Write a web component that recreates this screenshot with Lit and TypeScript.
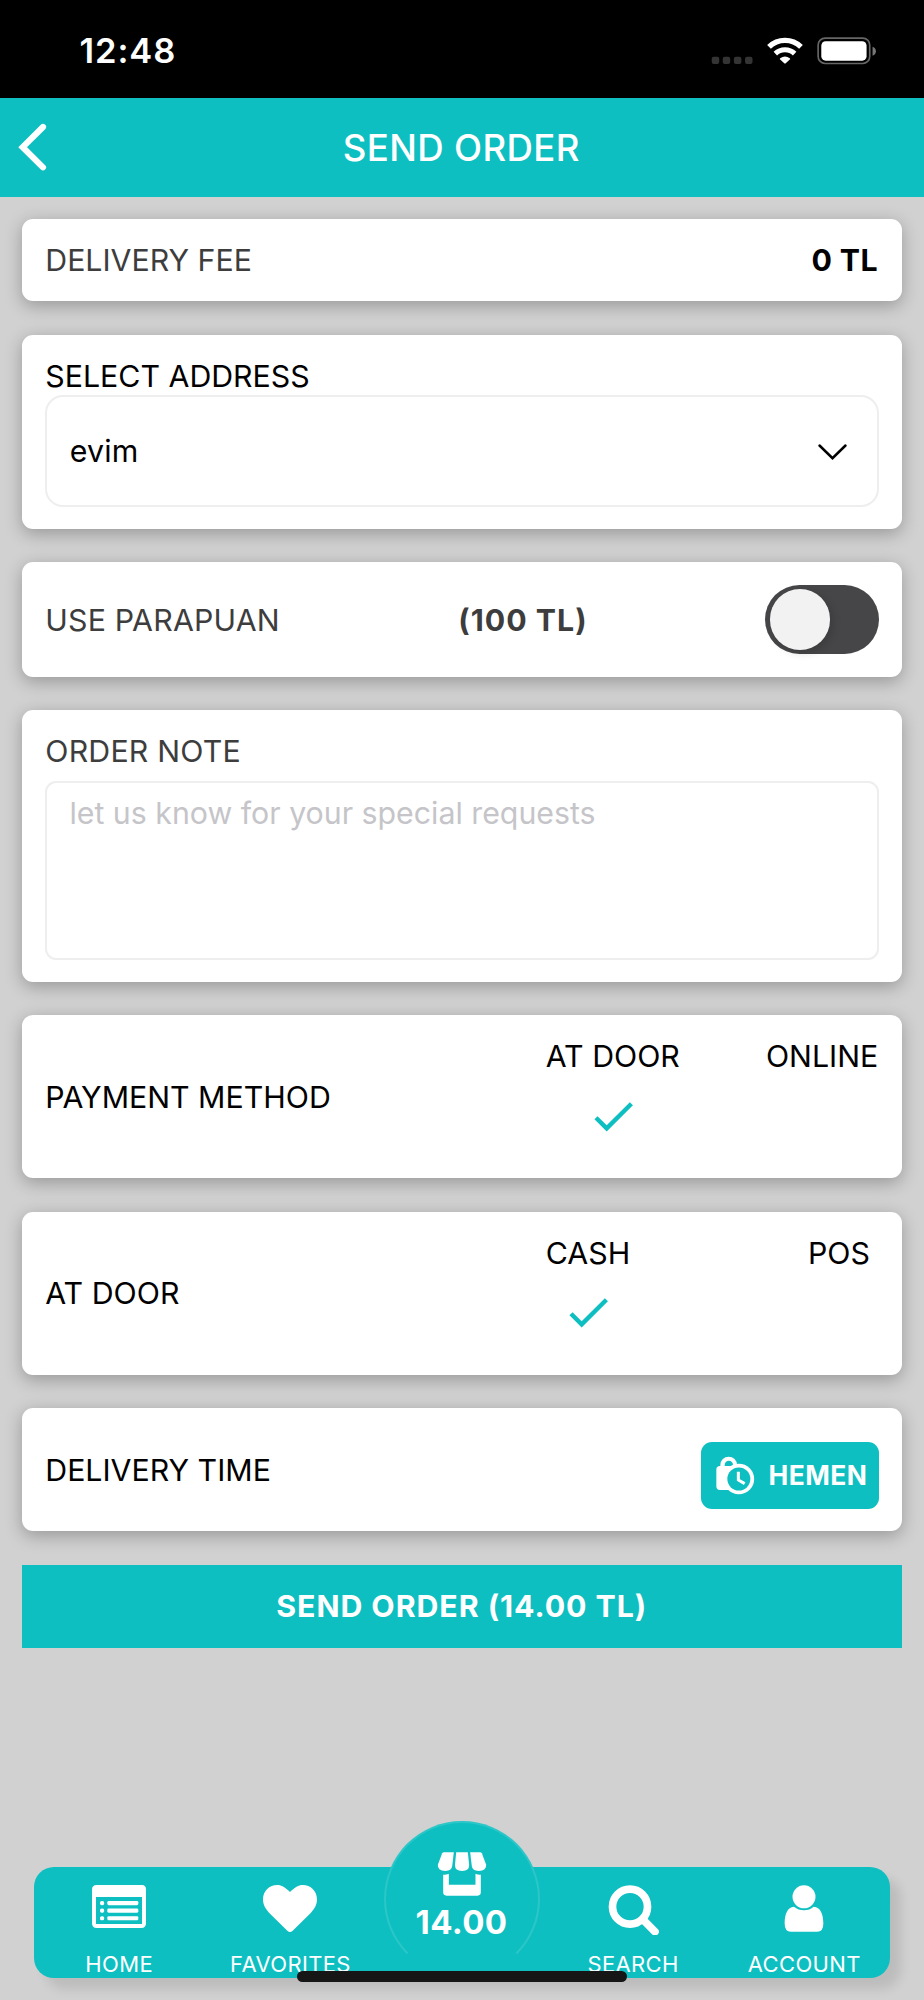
import { LitElement, html, css, svg, nothing } from 'lit';
import { customElement, property } from 'lit/decorators.js';

const checkIcon = html`<svg class="check" viewBox="0 0 24 24"><path d="M9 16.17 4.83 12l-1.42 1.41L9 19 21 7l-1.41-1.41z" /></svg>`;

const navIcons = {
  home: svg`<path fill-rule="evenodd" d="M12 12H150Q162 12 162 26V127Q162 141 148 141H14Q0 141 0 127V26Q0 12 14 12ZM12 48V129H150V48Z"/>
    ${[66, 88.5, 111.5].map(
      (y) => svg`<rect x="24" y=${y - 6} width="12.5" height="12.5" rx="5"/><rect x="46" y=${y - 6} width="93" height="12.5" rx="4"/>`,
    )}`,
  heart: svg`<path d="M81 33C66 19 56 12 43 12C19 12 0 30 0 55C0 71 7 83 18 95L73 149.500Q81 157 89 149.500L144 95C155 83 162 71 162 55C162 30 143 12 119 12C106 12 96 19 81 33Z"/>`,
  search: svg`<g fill="none" stroke="#fff"><circle cx="72" cy="77" r="52.500" stroke-width="23"/><path d="M113 118 147 152" stroke-width="23" stroke-linecap="round"/></g>`,
  account: svg`<circle cx="81" cy="47.500" r="34.500"/><path d="M51 77Q64 87.500 81 87.500Q98 87.500 110 77C131 78 139 100 139 128Q139 152 120 152H42Q23 152 23 128C23 100 31 78 51 77Z"/>`,
};

@customElement('nav-item')
class NavItem extends LitElement {
  @property() label = '';
  @property() icon: keyof typeof navIcons = 'home';

  static styles = css`
    :host {
      flex: 1;
      display: flex;
      flex-direction: column;
      align-items: center;
    }
    svg {
      width: 54px;
      height: 54px;
      fill: #fff;
      display: block;
    }
    .label {
      margin-top: 15.6px;
      font-size: 22px;
      line-height: 26px;
      letter-spacing: 0.35px;
      white-space: nowrap;
    }
  `;

  render() {
    return html`<svg viewBox="0 0 162 162">${navIcons[this.icon]}</svg><span class="label">${this.label}</span>`;
  }
}

@customElement('app-root')
class AppRoot extends LitElement {
  static styles = css`
    :host {
      --teal: #0ebfc1;
      display: flex;
      flex-direction: column;
      position: relative;
      box-sizing: border-box;
      width: 924px;
      height: 2000px;
      overflow: hidden;
      background: #d1d1d1;
      color: #000;
      font: 400 30.3px/37.3px Inter, 'Liberation Sans', sans-serif;
    }
    svg {
      display: block;
      flex: none;
    }
    .status {
      height: 98.3px;
      background: #000;
      color: #fff;
      display: flex;
      justify-content: space-between;
      align-items: center;
      padding: 2px 45.4px 0 79.5px;
      box-sizing: border-box;
      flex: none;
    }
    .time {
      font-size: 34.5px;
      font-weight: 600;
      letter-spacing: 0.9px;
      padding-top: 1px;
    }
    .indicators {
      width: 168.3px;
      height: 33.3px;
    }
    .header {
      height: 98.4px;
      flex: none;
      background: var(--teal);
      color: #fff;
      display: grid;
      grid-template-columns: 80px 1fr 80px;
      align-items: center;
      text-align: center;
      font-size: 36.6px;
      font-weight: 500;
      letter-spacing: 0.35px;
    }
    .header span {
      padding: 1.4px 1.4px 0 0;
    }
    .back {
      width: 30px;
      height: 50px;
      margin-left: 17px;
    }
    .content {
      display: flex;
      flex-direction: column;
      gap: 33.5px;
      padding: 22px 22.3px 0;
    }
    .content span {
      padding: 0.7px 0 0 0.7px;
      margin-bottom: -0.7px;
    }
    .card {
      background: #fff;
      border-radius: 11px;
      padding: 22.3px;
      box-sizing: border-box;
      box-shadow: 0 4.5px 17px rgba(0, 0, 0, 0.27);
      display: flex;
      align-items: center;
      justify-content: space-between;
    }
    .stack {
      flex-direction: column;
      align-items: stretch;
      justify-content: flex-start;
    }
    .fee {
      height: 82.8px;
    }
    .address {
      height: 193.9px;
    }
    .points {
      height: 114.2px;
    }
    .note {
      height: 271.9px;
    }
    .choice {
      height: 163px;
      align-items: stretch;
      justify-content: flex-start;
    }
    .when {
      height: 122.6px;
    }
    .soft {
      color: #3d3d3d;
    }
    .wide {
      letter-spacing: 0.2px;
    }
    .bold {
      font-weight: 700;
    }
    .fee .bold {
      letter-spacing: 0.4px;
      padding-right: 1.4px;
    }
    .select {
      height: 112px;
      box-sizing: border-box;
      border: 2px solid #eee;
      border-radius: 18px;
      padding: 0 29px 0 22.5px;
      display: flex;
      align-items: center;
      justify-content: space-between;
      letter-spacing: 0.15px;
    }
    .chevron {
      width: 32px;
      height: 20px;
      margin-top: 2px;
    }
    .textarea {
      margin-top: 11.2px;
      height: 179px;
      box-sizing: border-box;
      border: 2px solid #eee;
      border-radius: 11px;
      padding: 12px 22.8px;
      color: #c5c5c9;
    }
    .points .soft:first-child {
      flex: 0 0 412.3px;
    }
    .points .bold {
      flex: 1;
      font-weight: 700;
      letter-spacing: 1px;
    }
    .toggle {
      width: 114px;
      height: 69px;
      border-radius: 35px;
      background: #464648;
      padding: 4.2px;
      box-sizing: border-box;
    }
    .knob {
      width: 60.6px;
      height: 60.6px;
      border-radius: 50%;
      background: #f2f2f2;
      box-shadow: 3px 3px 8px rgba(0, 0, 0, 0.15);
    }
    .choice .name {
      flex: 0 0 499.8px;
      align-self: center;
    }
    .option {
      display: flex;
      flex-direction: column;
      align-items: center;
    }
    .option + .option {
      margin-left: auto;
      margin-right: 1.2px;
    }
    .option + .pos {
      margin-right: 9.5px;
    }
    .check {
      width: 52.5px;
      height: 52.5px;
      margin: 14.8px 0 0 1.2px;
      fill: var(--teal);
    }
    .slot {
      align-self: flex-end;
      width: 178px;
      height: 66.7px;
      box-sizing: border-box;
      padding: 0 12px 0 13px;
      background: var(--teal);
      border-radius: 11px;
      color: #fff;
      display: flex;
      align-items: center;
      justify-content: space-between;
      font-size: 26.4px;
      font-weight: 700;
      letter-spacing: 0.5px;
    }
    .bag {
      width: 41.7px;
      height: 40px;
      margin-left: -0.5px;
    }
    .send {
      height: 83.1px;
      background: var(--teal);
      color: #fff;
      display: flex;
      align-items: center;
      justify-content: center;
      font-weight: 700;
      letter-spacing: 0.95px;
    }
    .send span {
      padding: 1.2px 0.6px 0 0;
    }
    .tabs {
      margin: auto 34px 22.5px 33.5px;
      height: 111px;
      box-sizing: border-box;
      padding-top: 14.5px;
      border-radius: 20px;
      background: var(--teal);
      box-shadow: 11px 11px 11px rgba(0, 0, 0, 0.1);
      color: #fff;
      display: flex;
      position: relative;
    }
    .gap {
      flex: 1;
    }
    .cart {
      position: absolute;
      left: 350.5px;
      top: -45.5px;
      width: 156px;
      height: 156px;
      box-sizing: border-box;
      border-radius: 50%;
      border: 2px solid rgba(255, 255, 255, 0.12);
      border-bottom-color: transparent;
      background: var(--teal);
      padding-top: 28.3px;
      display: flex;
      flex-direction: column;
      align-items: center;
      font-size: 33px;
      line-height: 40px;
      font-weight: 700;
      letter-spacing: 0.4px;
    }
    .store {
      width: 50px;
      height: 45.3px;
      fill: #fff;
      margin: 0 1px 5.4px 0;
    }
    .cart span {
      padding-right: 1px;
    }
    .indicator {
      position: absolute;
      left: 297px;
      top: 1971px;
      width: 330px;
      height: 11px;
      border-radius: 5.5px;
      background: #161616;
    }
  `;

  private option(label: string, selected: boolean, extra = '') {
    return html`<div class="option ${extra}"><span>${label}</span>${selected ? checkIcon : nothing}</div>`;
  }

  render() {
    return html`
      <div class="status">
        <span class="time">12:48</span>
        <svg class="indicators" viewBox="745 100 505 100">
          <g fill="#343434">
            ${[750, 783, 816.5, 850].map((x) => svg`<rect x=${x} y="168" width="22.500" height="22" rx="6"/>`)}
          </g>
          <g fill="none" stroke="#fff">
            <path d="M922 138.500A69 69 0 0 1 1018 138.500" stroke-width="16" />
            <path d="M941 159A41.500 41.500 0 0 1 999 159" stroke-width="15" />
          </g>
          <path d="M967 187 955.500 176.500Q953 174.500 955.500 172.500Q970 162.500 984.500 172.500Q987 174.500 984.500 176.500L973 187Q970 190 967 187Z" fill="#fff" />
          <rect x="1069.500" y="112.500" width="155" height="76" rx="21" fill="none" stroke="#666" stroke-width="5" />
          <rect x="1079" y="122" width="136" height="58" rx="13" fill="#fff" />
          <path d="M1233 138Q1243 142 1243 151.500Q1243 161 1233 165Z" fill="#777" />
        </svg>
      </div>
      <div class="header">
        <svg class="back" viewBox="51 366 90 150">
          <path d="M129 381 68 441.500 129 502" fill="none" stroke="#fff" stroke-width="18.500" stroke-linecap="round" />
        </svg>
        <span>SEND ORDER</span>
      </div>
      <div class="content">
        <div class="card fee"><span class="soft">DELIVERY FEE</span><span class="bold">0 TL</span></div>
        <div class="card stack address">
          <span>SELECT ADDRESS</span>
          <div class="select">
            <span>evim</span>
            <svg class="chevron" viewBox="0 0 32 20">
              <path d="M3.500 3.500 16.500 16.200 29.500 3.500" fill="none" stroke="#000" stroke-width="2.500" stroke-linecap="round" />
            </svg>
          </div>
        </div>
        <div class="card points">
          <span class="soft wide">USE PARAPUAN</span>
          <span class="soft bold">(100 TL)</span>
          <div class="toggle"><div class="knob"></div></div>
        </div>
        <div class="card stack note">
          <span class="soft wide">ORDER NOTE</span>
          <div class="textarea">let us know for your special requests</div>
        </div>
        <div class="card choice">
          <span class="name">PAYMENT METHOD</span>
          ${this.option('AT DOOR', true)} ${this.option('ONLINE', false)}
        </div>
        <div class="card choice">
          <span class="name">AT DOOR</span>
          ${this.option('CASH', true)} ${this.option('POS', false, 'pos')}
        </div>
        <div class="card when">
          <span>DELIVERY TIME</span>
          <div class="slot">
            <svg class="bag" viewBox="755 195 125 120">
              <path d="M774 228V225A25 25 0 0 1 824 225V228H812V225A12.500 12.500 0 0 0 787 225V228Z" fill="#fff" />
              <path d="M773 228H830V300H773Q762 300 762 289V239Q762 228 773 228Z" fill="#fff" />
              <circle cx="829.500" cy="267" r="46" fill="#fff" />
              <circle cx="829.500" cy="267" r="34.500" fill="#0ebfc1" />
              <path d="M828 245V270L847 281" fill="none" stroke="#fff" stroke-width="9" />
            </svg>
            <span>HEMEN</span>
          </div>
        </div>
        <div class="send"><span>SEND ORDER (14.00 TL)</span></div>
      </div>
      <div class="tabs">
        <nav-item icon="home" label="HOME"></nav-item>
        <nav-item icon="heart" label="FAVORITES"></nav-item>
        <div class="gap"></div>
        <nav-item icon="search" label="SEARCH"></nav-item>
        <nav-item icon="account" label="ACCOUNT"></nav-item>
        <div class="cart">
          <svg class="store" viewBox="168.500 106 150 136">
            <path d="M190 109.500H219L214 152Q212 166 194 166Q169 165 171 147L184 113Q185.500 109.500 190 109.500Z" />
            <path d="M226 109.500H261L265 148Q265 166 244 166Q222 166 222.500 148Z" />
            <path d="M297 109.500H268L273 152Q275 166 293 166Q318 165 316 147L303 113Q301.500 109.500 297 109.500Z" />
            <path d="M187 177Q195 178 204 174V207H284V174Q292 178 300 177V230Q300 240 290 240H197Q187 240 187 230Z" />
          </svg>
          <span>14.00</span>
        </div>
      </div>
      <div class="indicator"></div>
    `;
  }
}
